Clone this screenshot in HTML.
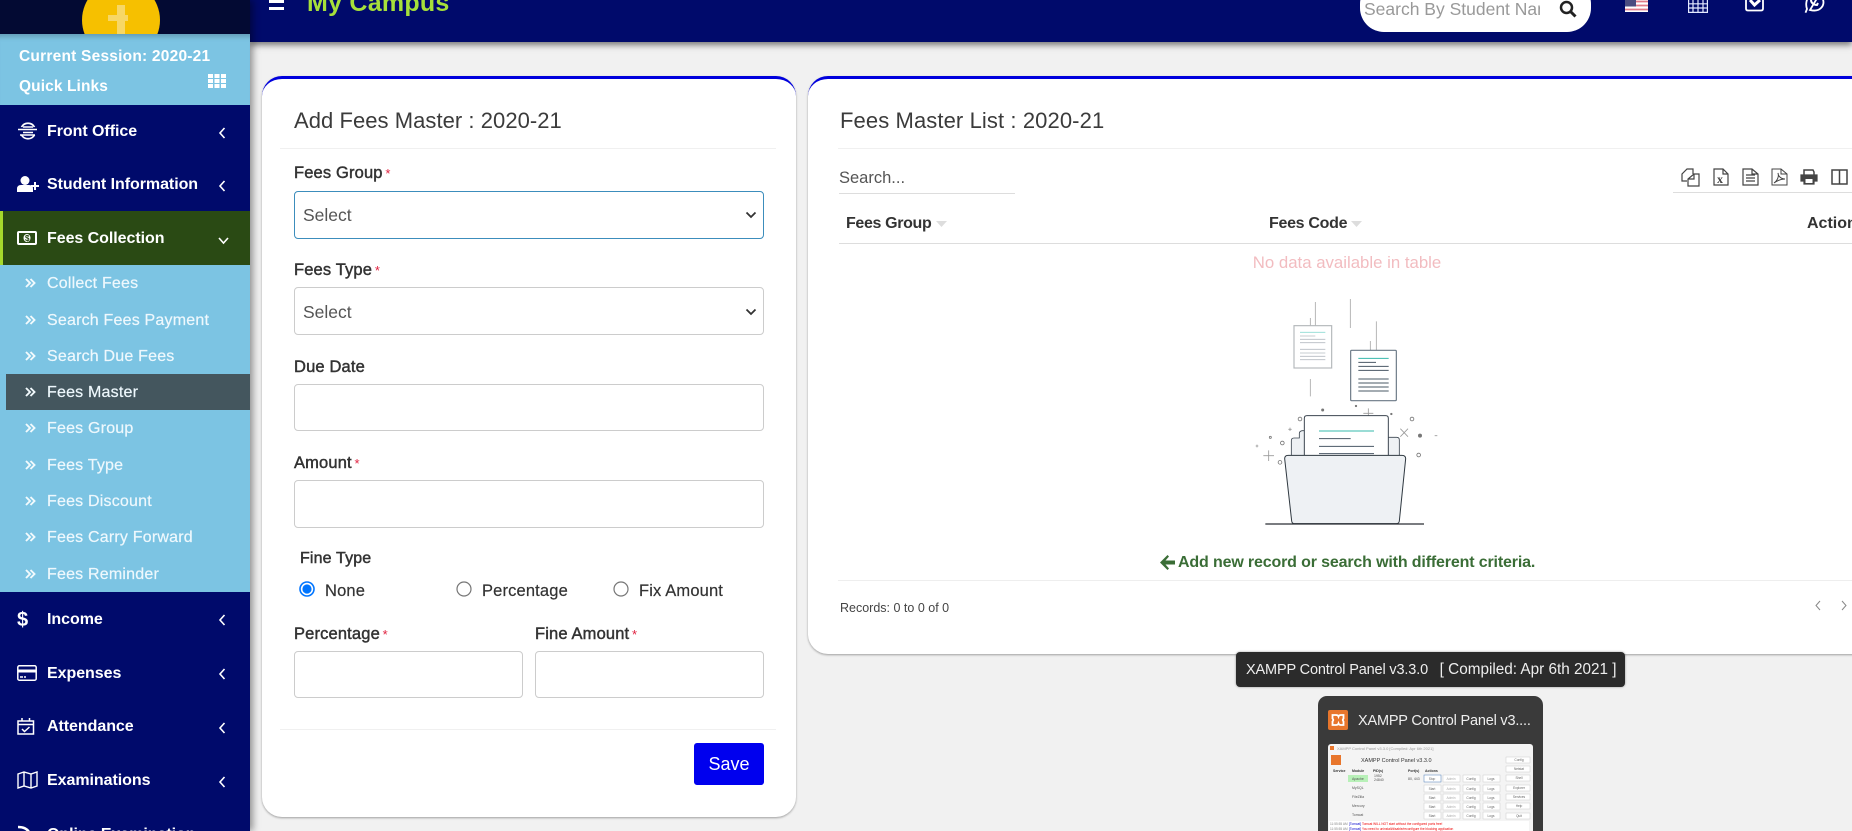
<!DOCTYPE html>
<html><head><meta charset="utf-8"><title>Fees Master</title>
<style>
*{box-sizing:border-box}
html,body{margin:0;padding:0;width:1852px;height:831px;overflow:hidden;background:#f1f1f1;font-family:"Liberation Sans",sans-serif;color:#333}
body{position:relative}
.a{position:absolute}
.t{position:absolute;white-space:nowrap;line-height:20px}
.m{color:#fff;font-weight:bold;font-size:16px;left:47px;letter-spacing:-.05px}
.s{color:#eef8fd;font-size:16px;left:47px;letter-spacing:.2px;-webkit-text-stroke:.2px #eef8fd}
.l{font-size:16.5px;color:#333;letter-spacing:.15px;-webkit-text-stroke:.45px #333}
.l b{color:#e0213f;font-weight:normal;font-size:13px;margin-left:-1px;-webkit-text-stroke:0}
.i{position:absolute;background:#fff;border:1px solid #ccc;border-radius:4px}
.sel{font-size:17.5px;color:#555;line-height:47px;padding-left:8px}
.r{font-size:16.5px;-webkit-text-stroke:.2px #333;letter-spacing:.15px}
svg{position:absolute;overflow:visible}
</style></head><body>

<!-- content cards -->
<div class="a" style="left:262px;top:76px;width:534px;height:741px;background:#fff;border-radius:20px;border-top:3px solid #0000dd;box-shadow:0 1px 2px rgba(0,0,0,.35)"></div>
<div class="a" style="left:808px;top:76px;width:1070px;height:578px;background:#fff;border-radius:20px;border-top:3px solid #0000dd;box-shadow:0 1px 2px rgba(0,0,0,.35)"></div>

<!-- left card -->
<div class="t" style="left:294px;top:111px;font-size:22px;color:#3b3b3b;letter-spacing:.05px">Add Fees Master : 2020-21</div>
<div class="a" style="left:280px;top:148px;width:496px;height:1px;background:#f0f0f0"></div>
<div class="t l" style="left:294px;top:163px">Fees Group<b> *</b></div>
<div class="i sel" style="left:294px;top:191px;width:470px;height:48px;border-color:#3c8dbc">Select</div>
<svg style="left:745px;top:211px" width="12" height="8"><path d="M1.500 1.500 6 6l4.500-4.500" fill="none" stroke="#333" stroke-width="1.800"/></svg>
<div class="t l" style="left:294px;top:260px">Fees Type<b> *</b></div>
<div class="i sel" style="left:294px;top:287px;width:470px;height:48px;line-height:48px">Select</div>
<svg style="left:745px;top:308px" width="12" height="8"><path d="M1.500 1.500 6 6l4.500-4.500" fill="none" stroke="#333" stroke-width="1.800"/></svg>
<div class="t l" style="left:294px;top:357px">Due Date</div>
<div class="i" style="left:294px;top:384px;width:470px;height:47px"></div>
<div class="t l" style="left:294px;top:453px">Amount<b> *</b></div>
<div class="i" style="left:294px;top:480px;width:470px;height:48px"></div>
<div class="t l" style="left:300px;top:549px;font-size:16px">Fine Type</div>
<svg style="left:299px;top:581px" width="16" height="16"><circle cx="8" cy="8" r="7" fill="#fff" stroke="#0075ff" stroke-width="1.600"/><circle cx="8" cy="8" r="4.600" fill="#0075ff"/></svg>
<div class="t r" style="left:325px;top:581px">None</div>
<svg style="left:456px;top:581px" width="16" height="16"><circle cx="8" cy="8" r="7" fill="#fff" stroke="#767676" stroke-width="1.200"/></svg>
<div class="t r" style="left:482px;top:581px">Percentage</div>
<svg style="left:613px;top:581px" width="16" height="16"><circle cx="8" cy="8" r="7" fill="#fff" stroke="#767676" stroke-width="1.200"/></svg>
<div class="t r" style="left:639px;top:581px">Fix Amount</div>
<div class="t l" style="left:294px;top:624px">Percentage<b> *</b></div>
<div class="t l" style="left:535px;top:624px">Fine Amount<b> *</b></div>
<div class="i" style="left:294px;top:651px;width:229px;height:47px"></div>
<div class="i" style="left:535px;top:651px;width:229px;height:47px"></div>
<div class="a" style="left:280px;top:729px;width:496px;height:1px;background:#f0f0f0"></div>
<div class="a" style="left:694px;top:743px;width:70px;height:42px;background:#0000ee;border-radius:3px;color:#fff;font-size:18px;line-height:42px;text-align:center">Save</div>

<!-- right card -->
<div class="t" style="left:840px;top:111px;font-size:22px;color:#3b3b3b;letter-spacing:.1px">Fees Master List : 2020-21</div>
<div class="a" style="left:838px;top:148px;width:1014px;height:1px;background:#f0f0f0"></div>
<div class="t" style="left:839px;top:168px;font-size:16.500px;color:#555">Search...</div>
<div class="a" style="left:839px;top:193px;width:176px;height:1px;background:#ddd"></div>
<div class="a" style="left:1673px;top:192px;width:179px;height:1px;background:#ddd"></div>
<svg style="left:1670px;top:160px" width="182" height="30" fill="none" stroke="#444" stroke-width="1.200">
<path d="M17 21h-5v-7l5-5h6v5M24 14h5v12H18V19zM18 19h6v-5"/>
<path d="M44 9h9l5 5v11H44zM53 9v5h5"/><text x="47" y="23" font-size="12" font-family="Liberation Serif" font-weight="bold" fill="#444" stroke="none">x</text>
<path d="M73 9h9l6 5v11H73zM82 9v5h6M76 15h9M76 18h9M76 21h9"/>
<path d="M102 9h9l6 5v11h-15zM111 9v5h6M104 23c4-3 5-7 4-10 0 3 3 6 7 6-3 0-7 1-11 4z" stroke-width="1"/>
<path d="M131 15h16v6h-3v3h-10v-3h-3z" fill="#444"/><path d="M134 15v-5h9l1 2v3" stroke-width="1.500"/><path d="M135.500 19h7v4h-7z" fill="#fff" stroke="none"/>
<path d="M162 10h15v14h-15zM169.500 10v14" stroke-width="1.500"/>
</svg>
<div class="t" style="left:846px;top:214px;font-size:16px;font-weight:bold;color:#333;letter-spacing:-.35px">Fees Group</div>
<svg style="left:936px;top:221px" width="12" height="6"><path d="M0 0h11L5.500 6z" fill="#ddd"/></svg>
<div class="t" style="left:1269px;top:214px;font-size:16px;font-weight:bold;color:#333;letter-spacing:-.3px">Fees Code</div>
<svg style="left:1351px;top:221px" width="12" height="6"><path d="M0 0h11L5.500 6z" fill="#ddd"/></svg>
<div class="t" style="left:1807px;top:214px;font-size:16px;font-weight:bold;color:#333">Action</div>
<div class="a" style="left:839px;top:243px;width:1013px;height:1px;background:#ddd"></div>
<div class="t" style="left:1147px;width:400px;text-align:center;top:253px;font-size:16.800px;color:#f2bcc0">No data available in table</div>

<!-- illustration -->
<svg style="left:1220px;top:280px" width="240" height="260" viewBox="0 0 720 780" fill="none">
<g stroke="#a8a8a8" stroke-width="2.500">
<path d="M286 66v78M271 114v30M391 57v87M271 297v52M469 124v92M451 183v33"/>
<rect x="222" y="137" width="113" height="127" fill="#fff" stroke="#b4b8bb" stroke-width="3.500"/>
</g>
<path d="M240 157h76" stroke="#8ddbd3" stroke-width="2.500"/>
<path d="M240 168h46M240 178h76M240 188h76M240 208h76M240 219h76M240 229h76M240 239h76" stroke="#b5bcc2" stroke-width="2.500"/>
<rect x="392" y="211" width="137" height="151" rx="3" fill="#fff" stroke="#6a7885" stroke-width="3.500"/>
<path d="M415 235h91" stroke="#36b8ab" stroke-width="3"/>
<path d="M415 247h53M415 259h91M415 271h91M415 297h91M415 309h91M415 321h91M415 333h91" stroke="#4a5866" stroke-width="3"/>
<path d="M430 400h30M445 385v30M130 527h32M146 511v32M541 446l23 24M564 446l-23 24M205 448h10M210 443v10M107 498h8M111 494v8M644 467h8" stroke="#9a9a9a" stroke-width="2.500"/>
<g stroke="#777" stroke-width="2.500"><circle cx="240" cy="417" r="5.500"/><circle cx="187" cy="489" r="5.500"/><circle cx="180" cy="547" r="5.500"/><circle cx="151" cy="472" r="3"/><circle cx="576" cy="417" r="5.500"/><circle cx="596" cy="525" r="5.500"/></g>
<g fill="#777"><circle cx="308" cy="390" r="4.500"/><circle cx="408" cy="378" r="3.500"/><circle cx="514" cy="402" r="3.500"/><circle cx="600" cy="467" r="6"/></g>
<path d="M214 530v-48q0-8 8-8h16v-14q0-6 8-8h20v78z" fill="#eef1f4" stroke="#3c4650" stroke-width="2.500"/>
<path d="M490 530v-58h40q8 0 8 8v50z" fill="#eef1f4" stroke="#3c4650" stroke-width="2.500"/>
<path d="M253 530V415q0-8 8-8h236q8 0 8 8v115z" fill="#fff" stroke="#3c4650" stroke-width="3"/>
<path d="M297 453h165" stroke="#36b8ab" stroke-width="3"/>
<path d="M297 476h95M297 499h165M297 521h165" stroke="#4a5866" stroke-width="3"/>
<path d="M194 536q0-10 10-10h342q11 0 11 10l-19 187q-1 8-9 8H224q-8 0-9-8z" fill="#eef1f4" stroke="#2f3840" stroke-width="3"/>
<path d="M136 732h476" stroke="#2a2f35" stroke-width="4"/>
</svg>

<svg style="left:1160px;top:555px" width="16" height="15"><path d="M7.500 0 9 1.500 5.500 5.500H15v4H5.500L9 13.500 7.500 15 0 7.500z" fill="#3a6d36"/></svg>
<div class="t" style="left:1178px;top:553px;font-size:16px;font-weight:bold;color:#3a6d36;letter-spacing:-.15px">Add new record or search with different criteria.</div>
<div class="a" style="left:838px;top:580px;width:1014px;height:1px;background:#eee"></div>
<div class="t" style="left:840px;top:598px;font-size:12.500px;color:#444">Records: 0 to 0 of 0</div>
<svg style="left:1815px;top:600px" width="34" height="11" fill="none" stroke="#888" stroke-width="1"><path d="M5 1 1 5.500 5 10M27 1l4 4.500-4 4.500"/></svg>

<!-- taskbar tooltip -->
<div class="a" style="left:1236px;top:652px;width:389px;height:35px;background:#2b2b2b;border-radius:4px;box-shadow:0 0 2px rgba(0,0,0,.4);color:#eee;font-size:14.500px;letter-spacing:-.15px;line-height:36px;padding-left:10px;white-space:pre">XAMPP Control Panel v3.3.0   <span style="font-size:15.300px;letter-spacing:0">[ Compiled: Apr 6th 2021 ]</span></div>
<div class="a" style="left:1318px;top:696px;width:225px;height:140px;background:#3a3a3a;border-radius:9px 9px 0 0"></div>
<div class="a" style="left:1328px;top:710px;width:20px;height:20px;background:#e8762c;border-radius:2px"></div>
<svg style="left:1328px;top:710px" width="20" height="20" fill="none" stroke="#fff" stroke-width="1.800"><path d="M4.500 5h3.500q2 0 2.500 1.500Q11 5 13 5h2.500v3.500q-1.500 1.500 0 3V15H13q-2 0-2.500-1.500Q10 15 8 15H4.500v-3.500q1.500-1.500 0-3z"/></svg>
<div class="t" style="left:1358px;top:711px;font-size:14.500px;letter-spacing:-.2px;color:#eee">XAMPP Control Panel v3....</div>
<div class="a" style="left:1328px;top:744px;width:205px;height:87px;background:#f4f4f4;border-radius:3px 3px 0 0"></div>
<svg style="left:1328px;top:744px" width="205" height="87">
<rect x="2" y="2" width="4" height="4" fill="#e8762c"/><rect x="3" y="11" width="10" height="10" fill="#e8762c"/>
<text x="9" y="6" font-size="4" fill="#999">XAMPP Control Panel v3.3.0 [Compiled: Apr 6th 2021]</text>
<text x="33" y="18" font-size="5.500" fill="#333">XAMPP Control Panel v3.3.0</text>
<g font-size="3.500" fill="#333" font-weight="bold"><text x="5" y="28">Service</text><text x="24" y="28">Module</text><text x="45" y="28">PID(s)</text><text x="80" y="28">Port(s)</text><text x="97" y="28">Actions</text></g>
<rect x="20" y="31" width="20" height="7" fill="#b8f0b8"/>
<g font-size="3.500" fill="#555"><text x="24" y="36">Apache</text><text x="24" y="45">MySQL</text><text x="24" y="54">FileZilla</text><text x="24" y="63">Mercury</text><text x="24" y="72">Tomcat</text><text x="46" y="33">1952</text><text x="46" y="37">24840</text><text x="80" y="36">80, 443</text></g>
<g fill="#fff" stroke="#ccc" stroke-width=".5">
<rect x="96" y="31" width="17" height="7" stroke="#4a7cb8"/><rect x="115" y="31" width="17" height="7"/><rect x="135" y="31" width="17" height="7"/><rect x="155" y="31" width="17" height="7"/>
<rect x="96" y="41" width="17" height="7"/><rect x="115" y="41" width="17" height="7"/><rect x="135" y="41" width="17" height="7"/><rect x="155" y="41" width="17" height="7"/>
<rect x="96" y="50" width="17" height="7"/><rect x="115" y="50" width="17" height="7"/><rect x="135" y="50" width="17" height="7"/><rect x="155" y="50" width="17" height="7"/>
<rect x="96" y="59" width="17" height="7"/><rect x="115" y="59" width="17" height="7"/><rect x="135" y="59" width="17" height="7"/><rect x="155" y="59" width="17" height="7"/>
<rect x="96" y="68" width="17" height="7"/><rect x="115" y="68" width="17" height="7"/><rect x="135" y="68" width="17" height="7"/><rect x="155" y="68" width="17" height="7"/>
<rect x="178" y="13" width="24" height="6"/><rect x="178" y="22" width="24" height="6"/><rect x="178" y="31" width="24" height="6"/><rect x="178" y="41" width="24" height="6"/><rect x="178" y="50" width="24" height="6"/><rect x="178" y="59" width="24" height="6"/><rect x="178" y="69" width="24" height="6"/></g>
<g font-size="3.200" fill="#666" text-anchor="middle"><text x="104" y="36">Stop</text><text x="123" y="36" fill="#aaa">Admin</text><text x="143" y="36">Config</text><text x="163" y="36">Logs</text>
<text x="104" y="46">Start</text><text x="123" y="46" fill="#aaa">Admin</text><text x="143" y="46">Config</text><text x="163" y="46">Logs</text>
<text x="104" y="55">Start</text><text x="123" y="55" fill="#aaa">Admin</text><text x="143" y="55">Config</text><text x="163" y="55">Logs</text>
<text x="104" y="64">Start</text><text x="123" y="64" fill="#aaa">Admin</text><text x="143" y="64">Config</text><text x="163" y="64">Logs</text>
<text x="104" y="73">Start</text><text x="123" y="73" fill="#aaa">Admin</text><text x="143" y="73">Config</text><text x="163" y="73">Logs</text>
<text x="191" y="17">Config</text><text x="191" y="26">Netstat</text><text x="191" y="35">Shell</text><text x="191" y="45">Explorer</text><text x="191" y="54">Services</text><text x="191" y="63">Help</text><text x="191" y="73">Quit</text></g>
<rect x="1" y="77" width="200" height="10" fill="#fff"/>
<text x="2" y="81" font-size="3.200" fill="#888">11:55:55 AM</text><text x="21" y="81" font-size="3.200" fill="#00c">[Tomcat]</text><text x="34" y="81" font-size="3.200" fill="#e00">Tomcat WILL NOT start without the configured ports free!</text>
<text x="2" y="86" font-size="3.200" fill="#888">11:55:55 AM</text><text x="21" y="86" font-size="3.200" fill="#00c">[Tomcat]</text><text x="34" y="86" font-size="3.200" fill="#e00">You need to uninstall/disable/reconfigure the blocking application</text>
</svg>

<!-- top bar -->
<div class="a" style="left:250px;top:0;width:1602px;height:42px;background:#000a6b;box-shadow:0 3px 6px rgba(0,0,0,.5)"></div>
<div class="a" style="left:269px;top:0;width:15px;height:2.500px;background:#fff"></div>
<div class="a" style="left:269px;top:7px;width:15px;height:2.500px;background:#fff"></div>
<div class="t" style="left:307px;top:-7px;font-size:25px;font-weight:bold;color:#a6e03a;letter-spacing:.25px">My Campus</div>
<div class="a" style="left:1360px;top:-20px;width:231px;height:52px;background:#fff;border-radius:24px"></div>
<div class="t" style="left:1364px;top:-1px;width:176px;overflow:hidden;font-size:17.500px;color:#999">Search By Student Name</div>
<svg style="left:1559px;top:0" width="18" height="18" fill="none" stroke="#222" stroke-width="2.500"><circle cx="7.500" cy="7.500" r="5.500"/><path d="m11.500 11.500 5 5" stroke-width="3"/></svg>
<svg style="left:1625px;top:0" width="23" height="12"><rect width="23" height="12" fill="#fff"/><path d="M0 1.500h23M0 5.500h23M0 9.500h23" stroke="#e07a88" stroke-width="1.800"/><rect width="11" height="6.500" fill="#4a4c80"/></svg>
<svg style="left:1688px;top:0" width="20" height="13" fill="none" stroke="#e4eaff" stroke-width="1.200"><path d="M.6 0v12.400h18.800V0M.6 3.800h18.800M.6 8h18.800M5 0v12M10 0v12M15 0v12"/></svg>
<svg style="left:1745px;top:0" width="19" height="12" fill="none" stroke="#fff" stroke-width="1.800"><path d="M1 0v8.500q0 2 2 2h13q2 0 2-2V0" /><path d="m5 0 4.500 5L15 0" stroke-width="3"/></svg>
<svg style="left:1804px;top:0" width="21" height="14" fill="none" stroke="#fff" stroke-width="1.800"><path d="M1.500 12.700 3 9C1.500 5 2-1 6-5M15-5c5 3 6 9 2 13-3 3-7 3-11 2z"/><path d="M7 0c0 3 3 5 6 5l1-2" stroke-width="2"/></svg>

<!-- sidebar -->
<div class="a" style="left:0;top:0;width:250px;height:831px;background:#000a6b;box-shadow:3px 0 7px rgba(0,0,0,.4)"></div>
<div class="a" style="left:0;top:0;width:250px;height:34px;background:#030a33;overflow:hidden">
<div class="a" style="left:82px;top:-19px;width:78px;height:78px;border-radius:50%;background:#f6c000"></div>
<div class="a" style="left:117px;top:5px;width:8px;height:30px;background:#f7d766"></div>
<div class="a" style="left:108px;top:15px;width:20px;height:6px;background:#f7d766"></div>
</div>
<div class="a" style="left:0;top:34px;width:250px;height:71px;background:#7cc4e3;box-shadow:inset 0 7px 5px -4px rgba(70,110,130,.45)"></div>
<div class="t" style="left:19px;top:47px;font-size:15.500px;font-weight:bold;color:#fff;letter-spacing:.22px">Current Session: 2020-21</div>
<div class="t" style="left:19px;top:77px;font-size:15.500px;font-weight:bold;color:#fff;letter-spacing:.1px">Quick Links</div>
<svg style="left:208px;top:74px" width="18" height="14" fill="#fff"><path d="M0 0h5v4H0zM6.500 0h5v4h-5zM13 0h5v4h-5zM0 5h5v4H0zM6.500 5h5v4h-5zM13 5h5v4h-5zM0 10h5v4H0zM6.500 10h5v4h-5zM13 10h5v4h-5z"/></svg>

<svg style="left:18px;top:122px" width="20" height="18" fill="none" stroke="#fff" stroke-width="1.700"><path d="M3.500 5A7.500 7.500 0 0 1 16.500 5M3.500 13A7.500 7.500 0 0 0 16.500 13"/><path d="M0 7.500h19M5 5h10M5 10.500h10M2 13h15" stroke-width="1.500"/></svg>
<div class="t m" style="top:122px">Front Office</div>
<svg style="left:17px;top:176px" width="22" height="16" fill="#fff"><circle cx="8" cy="4.500" r="4.500"/><path d="M0 16v-3q0-4 4-4h8q4 0 4 4v3z"/><path d="M14 9h8v2h-8zM17 6h2v8h-2z"/></svg>
<div class="t m" style="top:175px">Student Information</div>
<div class="a" style="left:0;top:211px;width:250px;height:54px;background:#2a4a14"></div>
<div class="a" style="left:0;top:211px;width:3px;height:54px;background:#a6d92c"></div>
<svg style="left:17px;top:231px" width="20" height="14"><rect x="1" y="1" width="18" height="12" rx="1" fill="none" stroke="#fff" stroke-width="2"/><ellipse cx="10" cy="7" rx="3.500" ry="4" fill="#fff"/><text x="8" y="10" font-size="8" font-weight="bold" fill="#2a4a14">$</text></svg>
<div class="t m" style="top:229px">Fees Collection</div>

<div class="a" style="left:0;top:265px;width:250px;height:327px;background:#7cc4e3"></div>
<div class="a" style="left:6px;top:374px;width:244px;height:36px;background:#44565e"></div>
<div class="t s" style="top:274px">Collect Fees</div>
<div class="t s" style="top:311px">Search Fees Payment</div>
<div class="t s" style="top:347px">Search Due Fees</div>
<div class="t s" style="top:383px">Fees Master</div>
<div class="t s" style="top:419px">Fees Group</div>
<div class="t s" style="top:456px">Fees Type</div>
<div class="t s" style="top:492px">Fees Discount</div>
<div class="t s" style="top:528px">Fees Carry Forward</div>
<div class="t s" style="top:565px">Fees Reminder</div>
<svg style="left:25px;top:278px" width="11" height="300" fill="none" stroke="#f2fafd" stroke-width="1.900"><path d="M1 1l4 4-4 4M5.500 1l4 4-4 4"/><path d="M1 38l4 4-4 4M5.500 38l4 4-4 4M1 74l4 4-4 4M5.500 74l4 4-4 4M1 110l4 4-4 4M5.500 110l4 4-4 4M1 146l4 4-4 4M5.500 146l4 4-4 4M1 183l4 4-4 4M5.500 183l4 4-4 4M1 219l4 4-4 4M5.500 219l4 4-4 4M1 255l4 4-4 4M5.500 255l4 4-4 4M1 292l4 4-4 4M5.500 292l4 4-4 4"/></svg>

<div class="t" style="left:17px;top:610px;font-size:20px;font-weight:bold;color:#fff">$</div>
<div class="t m" style="top:610px">Income</div>
<svg style="left:17px;top:665px" width="20" height="16" fill="none" stroke="#fff" stroke-width="1.500"><rect x=".8" y=".8" width="18.400" height="14.400" rx="1.500"/><path d="M1 6h18" stroke-width="3"/><path d="M3 12h3M7 12h2" stroke-width="1.500"/></svg>
<div class="t m" style="top:664px">Expenses</div>
<svg style="left:17px;top:718px" width="18" height="17" fill="none" stroke="#fff" stroke-width="1.500"><rect x="1" y="3" width="15.500" height="13"/><path d="M1 6.500h15.500M5 0v3.500M12.500 0v3.500M5 11l2.500 2.500L12.500 9"/></svg>
<div class="t m" style="top:717px">Attendance</div>
<svg style="left:17px;top:771px" width="21" height="18" fill="none" stroke="#fff" stroke-width="1.400"><path d="M1 3l6-2 7 2 6-2v14l-6 2-7-2-6 2zM7 1v14M14 3v14"/></svg>
<div class="t m" style="top:771px">Examinations</div>
<svg style="left:17px;top:826px" width="20" height="6" fill="none" stroke="#fff" stroke-width="2.500"><path d="M1 1q8 0 11 5"/></svg>
<div class="t m" style="top:825px">Online Examination</div>

<svg style="left:218px;top:127px" width="10" height="700" fill="none" stroke="#fff" stroke-width="1.600">
<path d="M6.500 1 2 6l4.500 5M6.500 54 2 59l4.500 5M6.500 488 2 493l4.500 5M6.500 542 2 547l4.500 5M6.500 596 2 601l4.500 5M6.500 650 2 655l4.500 5"/>
<path d="M1 111l4.500 5 4.500-5"/></svg>
</body></html>
